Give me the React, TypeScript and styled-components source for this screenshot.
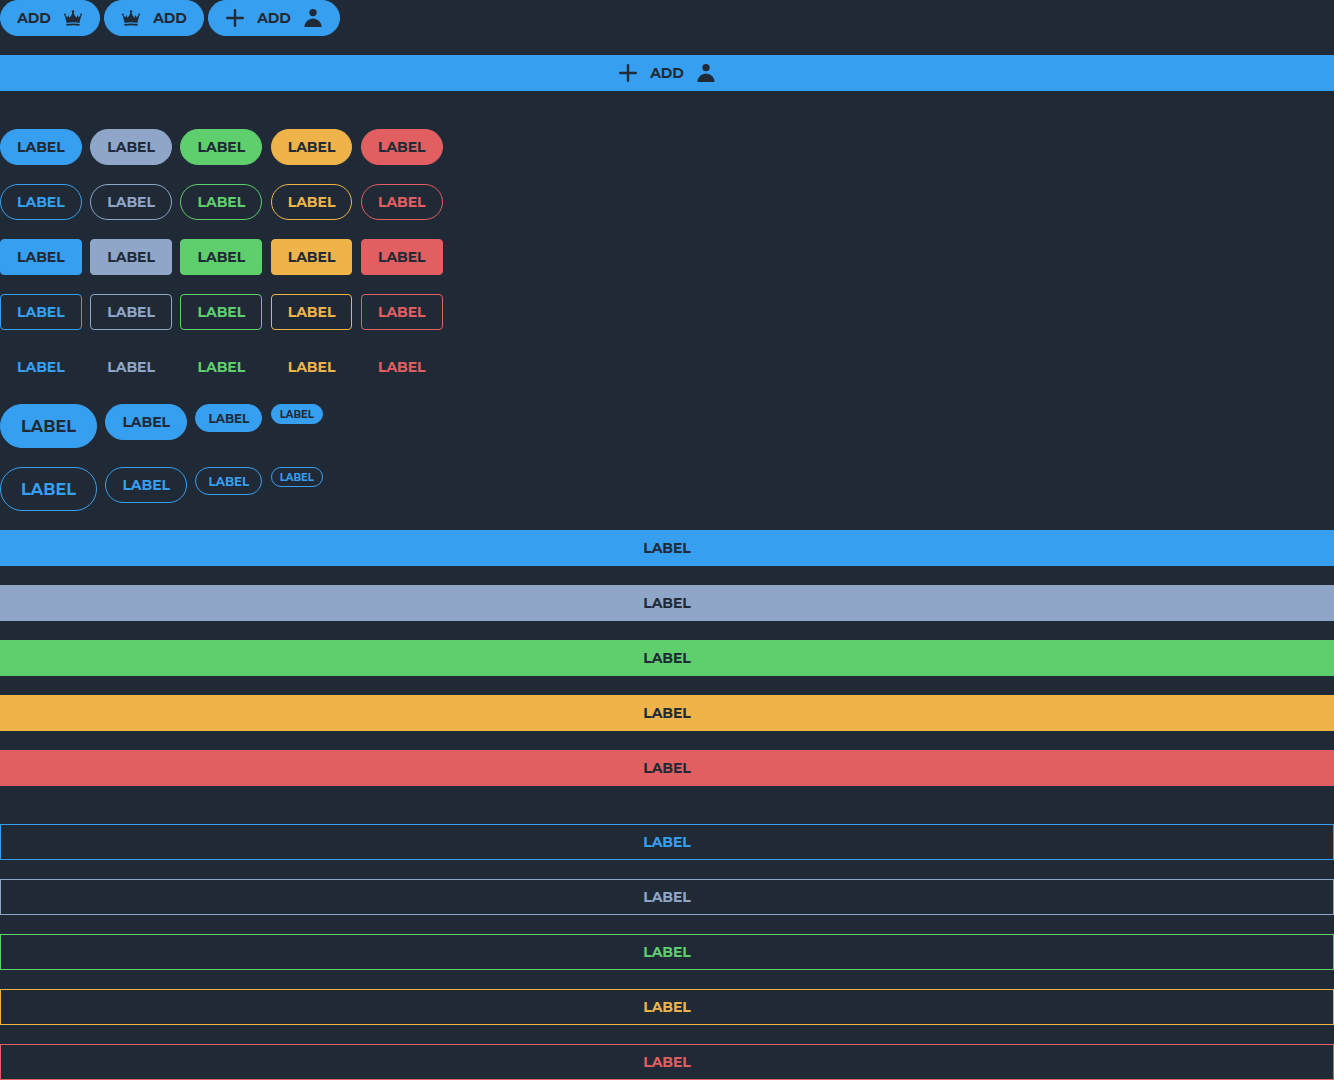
import React from 'react';
import styled, { createGlobalStyle, css } from 'styled-components';

const dark = '#202a36';
const palette = {
  primary: '#379fef',
  secondary: '#8fa6c9',
  success: '#5fce6c',
  warning: '#eeb44a',
  danger: '#e15f60',
};
type Tone = keyof typeof palette;
const tones = Object.keys(palette) as Tone[];

const sizes = {
  large: { height: 44, width: 97, font: 16, spacing: 0.03, drop: 1 },
  medium: { height: 36, width: 81.73, font: 14, spacing: -0.04, drop: 0 },
  small: { height: 28, width: 67.05, font: 12, spacing: -0.07, drop: 1 },
  tiny: { height: 20, width: 52, font: 10, spacing: -0.05, drop: 1 },
};
type Size = keyof typeof sizes;

const GlobalStyle = createGlobalStyle`
  body { margin: 0; background: ${dark}; }
  *, *::before, *::after { box-sizing: border-box; }
`;

const Page = styled.main`
  display: flex;
  flex-direction: column;
  gap: 19px;
`;

const Row = styled.div<{ $gap?: number }>`
  display: flex;
  align-items: flex-start;
  gap: ${p => p.$gap ?? 8.5}px;
`;

const Stack = styled.section<{ $spaced?: boolean }>`
  display: flex;
  flex-direction: column;
  gap: 19px;
  margin-bottom: ${p => (p.$spaced ? 19 : 0)}px;
`;

interface ButtonProps {
  $tone?: Tone;
  $size?: Size;
  $look?: 'fill' | 'outline' | 'text';
  $shape?: 'pill' | 'rounded' | 'block';
  $width?: number;
}

const Button = styled.button<ButtonProps>`
  ${({ $tone = 'primary', $size = 'medium', $look = 'fill', $shape = 'pill', $width }) => {
    const size = sizes[$size];
    const color = palette[$tone];
    return css`
      width: ${$shape === 'block' ? '100%' : `${$width ?? size.width}px`};
      height: ${size.height}px;
      padding: ${size.drop * 2}px 0 0;
      border: 1px solid ${$look === 'text' ? 'transparent' : color};
      border-radius: ${$shape === 'pill' ? size.height / 2 : $shape === 'rounded' ? 4 : 0}px;
      background: ${$look === 'fill' ? color : 'transparent'};
      color: ${$look === 'fill' ? dark : color};
      font-size: ${size.font}px;
      letter-spacing: ${size.spacing}px;
    `;
  }}
  display: flex;
  flex: none;
  align-items: center;
  justify-content: center;
  gap: 12px;
  font-family: Montserrat, Inter, sans-serif;
  font-weight: 750;
  line-height: 1;
  white-space: nowrap;
  cursor: pointer;
`;

const AddText = styled.span`
  width: 34px;
  text-align: center;
  letter-spacing: -0.1px;
`;

const Icon = styled.svg`
  width: 20px;
  height: 20px;
  flex: none;
  fill: currentColor;
`;

const Crown = () => (
  <Icon viewBox="0 0 20 20">
    <circle cx="10" cy="3.5" r="1.2" />
    <circle cx="1.9" cy="6.5" r=".9" />
    <circle cx="18.1" cy="6.5" r=".9" />
    <path d="M1.5 6.5Q4 9.8 6.6 9.7Q9 7.8 9.6 3.5H10.4Q11 7.8 13.4 9.7Q16 9.8 18.5 6.5L16.4 14.9Q10 13.5 3.6 14.9Z" />
    <path d="M3.4 16.1Q10 14.9 16.6 16.1V17.8Q10 16.7 3.4 17.8Z" />
    <path d="M5.3 7 6.8 10.5H4.2ZM14.7 7 13.2 10.5H15.8Z" />
  </Icon>
);

const Plus = () => (
  <Icon viewBox="0 0 20 20">
    <path d="M10 2.2V17.8M2.2 10H17.8" fill="none" stroke="currentColor" strokeWidth="2.4" strokeLinecap="round" />
  </Icon>
);

const Person = () => (
  <Icon viewBox="0 0 20 20">
    <circle cx="10" cy="4.6" r="3.7" />
    <path d="M1.4 19A8.6 8.6 0 0 1 18.6 19Z" />
  </Icon>
);

const PlusAddPerson = () => (
  <>
    <Plus />
    <AddText>ADD</AddText>
    <Person />
  </>
);

const toneRows: Pick<ButtonProps, '$look' | '$shape'>[] = [
  { $look: 'fill', $shape: 'pill' },
  { $look: 'outline', $shape: 'pill' },
  { $look: 'fill', $shape: 'rounded' },
  { $look: 'outline', $shape: 'rounded' },
  { $look: 'text', $shape: 'pill' },
];

export default function App() {
  return (
    <>
      <GlobalStyle />
      <Page>
        <Stack $spaced>
          <Row $gap={4}>
            <Button $width={100}><AddText>ADD</AddText><Crown /></Button>
            <Button $width={100}><Crown /><AddText>ADD</AddText></Button>
            <Button $width={132}><PlusAddPerson /></Button>
          </Row>
          <Button $shape="block"><PlusAddPerson /></Button>
        </Stack>
        {toneRows.map((look, i) => (
          <Row key={i}>
            {tones.map(tone => <Button key={tone} $tone={tone} {...look}>LABEL</Button>)}
          </Row>
        ))}
        {(['fill', 'outline'] as const).map(look => (
          <Row key={look} $gap={8.35}>
            {(Object.keys(sizes) as Size[]).map(size => (
              <Button key={size} $size={size} $look={look}>LABEL</Button>
            ))}
          </Row>
        ))}
        <Stack $spaced>
          {tones.map(tone => <Button key={tone} $tone={tone} $shape="block">LABEL</Button>)}
        </Stack>
        <Stack>
          {tones.map(tone => <Button key={tone} $tone={tone} $shape="block" $look="outline">LABEL</Button>)}
        </Stack>
      </Page>
    </>
  );
}
